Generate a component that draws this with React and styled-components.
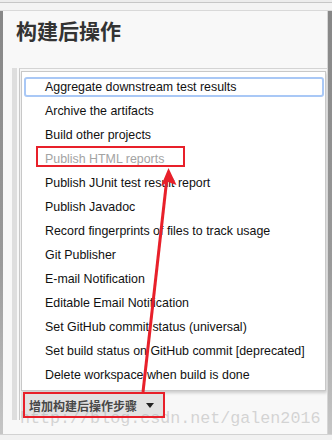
import React from "react";
import styled, { createGlobalStyle } from "styled-components";

const Global = createGlobalStyle`
  html, body { margin: 0; padding: 0; background: #ececec; }
  body { font-family: "Liberation Sans", Arial, sans-serif; }
`;

const Page = styled.div`
  position: relative;
  width: 332px;
  height: 440px;
  overflow: hidden;
  display: flex;
  flex-direction: column;
  background: #ececec;
`;

const TopStrip = styled.div`
  flex: none;
  margin-top: 2px;
  height: 7px;
  background: #f3f3f3;
  border-top: 1px solid #c6c6c6;
  border-bottom: 1px solid #d9d9d9;
`;

const Body = styled.div`
  flex: none;
  height: 423px;
  display: flex;
`;

const SideBar = styled.div`
  flex: none;
  width: ${(p) => p.$w}px;
  background: linear-gradient(#878787, #9a9a9a 60%, #c6c6c6);
  border-left: ${(p) => (p.$right ? "1px solid #d6d6d6" : "none")};
`;

const Panel = styled.div`
  flex: 1;
  min-width: 0;
  background: #f8f8f8;
  padding: 5px 0 0 9px;
  display: flex;
  flex-direction: column;
`;

const Title = styled.h1`
  margin: 0 0 24px 4px;
  font-family: "Noto Sans CJK SC", "Liberation Sans", sans-serif;
  font-size: 21px;
  font-weight: 700;
  line-height: 28px;
  color: #333;
`;

const Section = styled.div`
  border-left: 5px solid #dedede;
  padding-left: 2px;
  display: flex;
  flex-direction: column;
  align-self: stretch;
`;

const Frame = styled.div`
  border-left: 1px solid #cacaca;
  border-top: 1px solid #d4d4d4;
  padding: 2px 2px 2px 1px;
  display: flex;
  flex-direction: column;
`;

const List = styled.div`
  box-sizing: border-box;
  width: 305px;
  background: #fff;
  border: 1px solid #c8c8c8;
  padding: 3px 0;
  display: flex;
  flex-direction: column;
  box-shadow: 1px 2px 3px rgba(0, 0, 0, 0.18);
`;

const Item = styled.div`
  box-sizing: border-box;
  height: 20px;
  margin: 2px 1px 2px 2px;
  padding-left: 19px;
  border: 2px solid ${(p) => (p.$focused ? "#a9c8f6" : "transparent")};
  border-radius: 3px;
  display: flex;
  align-items: center;
  font-size: 12.4px;
  line-height: 16px;
  color: ${(p) => (p.$disabled ? "#a4a4a4" : "#111")};
  white-space: nowrap;
`;

const AddButton = styled.div`
  margin-top: 1px;
  align-self: flex-start;
  box-sizing: border-box;
  width: 142px;
  height: 26px;
  padding-left: 8px;
  background: #e2e2e2;
  display: flex;
  align-items: center;
  gap: 9px;
  font-family: "Noto Sans CJK SC", "Liberation Sans", sans-serif;
  font-size: 12px;
  font-weight: 700;
  color: #484848;
`;

const Caret = styled.span`
  width: 0;
  height: 0;
  border-left: 4px solid transparent;
  border-right: 4px solid transparent;
  border-top: 5px solid #222;
`;

const BottomStrip = styled.div`
  flex: 1;
  background: #f1f1f1;
  border-top: 1px solid #d2d2d2;
`;

const Watermark = styled.div`
  position: absolute;
  left: 20px;
  top: 409px;
  font-family: "Liberation Mono", "Courier New", monospace;
  font-size: 16.7px;
  line-height: 20px;
  color: rgba(175, 175, 175, 0.5);
  white-space: nowrap;
  pointer-events: none;
`;

const Annotations = styled.svg`
  position: absolute;
  left: 0;
  top: 0;
  pointer-events: none;
`;

const items = [
  "Aggregate downstream test results",
  "Archive the artifacts",
  "Build other projects",
  "Publish HTML reports",
  "Publish JUnit test result report",
  "Publish Javadoc",
  "Record fingerprints of files to track usage",
  "Git Publisher",
  "E-mail Notification",
  "Editable Email Notification",
  "Set GitHub commit status (universal)",
  "Set build status on GitHub commit [deprecated]",
  "Delete workspace when build is done",
];

export default function App() {
  return (
    <>
      <Global />
      <Page>
        <TopStrip />
        <Body>
          <SideBar $w={3} />
          <Panel>
            <Title>构建后操作</Title>
            <Section>
              <Frame>
                <List>
                  {items.map((t, i) => (
                    <Item key={t} $focused={i === 0} $disabled={i === 3}>
                      {t}
                    </Item>
                  ))}
                </List>
                <AddButton>
                  增加构建后操作步骤
                  <Caret />
                </AddButton>
              </Frame>
            </Section>
          </Panel>
          <SideBar $w={4} $right />
        </Body>
        <BottomStrip />
        <Watermark>http://blog.csdn.net/galen2016</Watermark>
        <Annotations width="332" height="440" viewBox="0 0 332 440">
          <rect x="37" y="147" width="147" height="19" fill="none" stroke="#e8202a" strokeWidth="2" />
          <rect x="24" y="393" width="140" height="24" fill="none" stroke="#e8202a" strokeWidth="2" />
          <line x1="143" y1="392" x2="166.5" y2="182" stroke="#e8202a" strokeWidth="3" />
          <polygon points="168.5,168 176.5,185 168,182 161,186" fill="#e8202a" />
        </Annotations>
      </Page>
    </>
  );
}
